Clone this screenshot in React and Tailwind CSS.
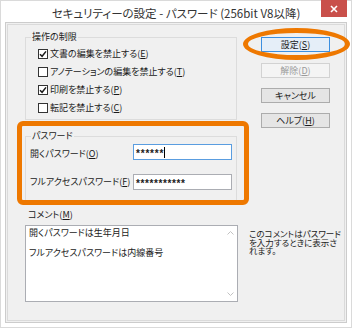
import React from 'react';

const jp = "font-['Noto_Sans_CJK_JP','Noto_Sans',sans-serif] [font-feature-settings:'palt']";

const Key = ({ children }) => <span className="underline underline-offset-[1px]">{children}</span>;

const CheckRow = ({ checked, text, k }) => (
  <div className="flex items-center h-[18px]">
    <div className="w-[10px] h-[10px] border border-[#333333] bg-white flex items-center justify-center">
      {checked && (
        <svg width="8" height="8" viewBox="0 0 8 8">
          <path d="M1 4.2 L3.1 6.3 L7 1.4" fill="none" stroke="#1a1a1a" strokeWidth="1.5" />
        </svg>
      )}
    </div>
    <span className="ml-[2px] text-[9px] leading-[10px] text-[#1a1a1a]">
      {text}(<Key>{k}</Key>)
    </span>
  </div>
);

const Btn = ({ children, primary, disabled, className = '' }) => (
  <div
    className={`w-[69px] h-[15px] flex items-center justify-center text-[9px] leading-[10px] border ${
      primary
        ? 'border-[#3c8fe0] bg-[#e5eef8]'
        : disabled
        ? 'border-[#d2d2d2] bg-[#f4f4f4] text-[#9a9a9a]'
        : 'border-[#acacac] bg-[#e5e5e5]'
    } ${className}`}
  >
    {children}
  </div>
);

export default function App() {
  return (
    <div className={`w-[352px] h-[328px] bg-white border border-[#dadada] flex flex-col text-[#1a1a1a] ${jp}`}>
      {/* title bar */}
      <div className="relative h-[21px] flex items-center justify-center pt-[3px]">
        <span className="text-[11.5px] leading-[14px] text-[#333333]">
          セキュリティーの設定 - パスワード (256bit V8以降)
        </span>
        <div className="absolute top-[-1px] right-[4px] w-[26px] h-[17px] bg-[#c9504b] flex items-center justify-center">
          <svg width="8" height="8" viewBox="0 0 8 8">
            <path d="M1 1 L7 7 M7 1 L1 7" stroke="#ffffff" strokeWidth="1.6" />
          </svg>
        </div>
      </div>

      {/* client area */}
      <div className="mx-[4px] h-[301px] border border-[#cccccc] bg-[#f0f0f0] p-[1px]">
        <div className="h-full border border-[#dadada] pl-[17px]">
          <div className="flex">
            {/* left column */}
            <div className="w-[212px] flex flex-col">
              <fieldset className="mt-[7px] w-[212px] border border-[#dcdcdc]">
                <legend className="ml-[5px] px-[1px] text-[9px] leading-[10px]">操作の制限</legend>
                <div className="pl-[12px] pt-[3px] pb-[2px]">
                  <CheckRow checked text="文書の編集を禁止する" k="E" />
                  <CheckRow text="アノテーションの編集を禁止する" k="T" />
                  <CheckRow checked text="印刷を禁止する" k="P" />
                  <CheckRow text="転記を禁止する" k="C" />
                </div>
              </fieldset>

              <div className="relative mt-[11px]">
                <fieldset className="w-[212px] border border-[#dcdcdc]">
                  <legend className="ml-[5px] px-[1px] text-[9px] leading-[10px]">パスワード</legend>
                  <div className="grid grid-cols-[103px_99px] items-center pl-[4px] pt-[3px] pb-[10px] gap-y-[14px] text-[9px] leading-[10px]">
                    <span className="pt-[3px]">開くパスワード(<Key>O</Key>)</span>
                    <div className="h-[16px] border border-[#5a9de0] bg-white flex items-center pl-[2px]">
                      <span className="font-['Liberation_Sans',sans-serif] font-bold text-[10px] leading-none tracking-[0.8px] pt-[3px]">******</span>
                      <span className="w-[1px] h-[11px] bg-black" />
                    </div>
                    <span>フルアクセスパスワード(<Key>F</Key>)</span>
                    <div className="h-[16px] border border-[#abadb3] bg-white flex items-center pl-[2px]">
                      <span className="font-['Liberation_Sans',sans-serif] font-bold text-[10px] leading-none tracking-[0.6px] pt-[3px]">***********</span>
                    </div>
                  </div>
                </fieldset>
                {/* highlight frame */}
                <div className="absolute top-[-10px] left-[-8px] right-[-12px] bottom-[-4px] border-[5px] border-[#ee7800] rounded-[6px] pointer-events-none" />
              </div>
            </div>

            {/* right column: buttons */}
            <div className="relative ml-[24px] mt-[12px] flex flex-col">
              <div className="relative">
                <Btn primary>設定(<Key>S</Key>)</Btn>
                <div className="absolute top-[-9px] left-[-18px] w-[107px] h-[32px] border-[5px] border-[#ee7800] rounded-[50%] pointer-events-none" />
              </div>
              <Btn disabled className="mt-[11px]">解除(<Key>D</Key>)</Btn>
              <Btn className="mt-[10px]">キャンセル</Btn>
              <Btn className="mt-[10px]">ヘルプ(<Key>H</Key>)</Btn>
            </div>
          </div>

          {/* comment */}
          <div className="mt-[9px] pl-[3px] text-[9px] leading-[10px]">コメント(<Key>M</Key>)</div>
          <div className="flex mt-[5px]">
            <div className="w-[213px] h-[77px] border border-[#abadb3] bg-white flex">
              <div className="flex-1 pl-[3px] pt-[2px] text-[9px] leading-[10px]">
                <div>開くパスワードは生年月日</div>
                <div className="mt-[10px]">フルアクセスパスワードは内線番号</div>
              </div>
              <div className="w-[14px] flex flex-col justify-between items-center py-[5px]">
                <svg width="7" height="4" viewBox="0 0 7 4">
                  <path d="M0.5 3.5 L3.5 0.5 L6.5 3.5" fill="none" stroke="#c2c2c2" strokeWidth="1" />
                </svg>
                <svg width="7" height="4" viewBox="0 0 7 4">
                  <path d="M0.5 0.5 L3.5 3.5 L6.5 0.5" fill="none" stroke="#c2c2c2" strokeWidth="1" />
                </svg>
              </div>
            </div>
            <div className="ml-[11px] mt-[4px] w-[92px] text-[8.5px] leading-[8.5px]">
              このコメントはパスワードを入力するときに表示されます。
            </div>
          </div>
        </div>
      </div>
    </div>
  );
}
